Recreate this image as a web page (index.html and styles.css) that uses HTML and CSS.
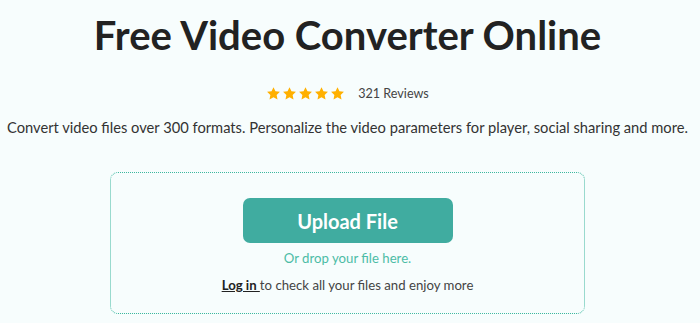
FILE: index.html
```html
<!DOCTYPE html>
<html lang="en">
<head>
<meta charset="utf-8">
<title>Free Video Converter Online</title>
<link rel="stylesheet" href="styles.css">
</head>
<body>
<main class="page">
  <h1 class="title">Free Video Converter Online</h1>
  <div class="rating">
    <span class="stars">
      <svg class="star" viewBox="0 0 24 24"><path d="M12 1.8l3.1 6.6 7.2.9-5.3 5 1.4 7.1L12 17.9l-6.4 3.5L7 14.3l-5.3-5 7.2-.9z"/></svg>
      <svg class="star" viewBox="0 0 24 24"><path d="M12 1.8l3.1 6.6 7.2.9-5.3 5 1.4 7.1L12 17.9l-6.4 3.5L7 14.3l-5.3-5 7.2-.9z"/></svg>
      <svg class="star" viewBox="0 0 24 24"><path d="M12 1.8l3.1 6.6 7.2.9-5.3 5 1.4 7.1L12 17.9l-6.4 3.5L7 14.3l-5.3-5 7.2-.9z"/></svg>
      <svg class="star" viewBox="0 0 24 24"><path d="M12 1.8l3.1 6.6 7.2.9-5.3 5 1.4 7.1L12 17.9l-6.4 3.5L7 14.3l-5.3-5 7.2-.9z"/></svg>
      <svg class="star" viewBox="0 0 24 24"><path d="M12 1.8l3.1 6.6 7.2.9-5.3 5 1.4 7.1L12 17.9l-6.4 3.5L7 14.3l-5.3-5 7.2-.9z"/></svg>
    </span>
    <span class="reviews">321 Reviews</span>
  </div>
  <p class="desc">Convert video files over 300 formats. Personalize the video parameters for player, social sharing and more.</p>
  <section class="drop">
    <button class="upload" type="button">Upload File</button>
    <p class="hint">Or drop your file here.</p>
    <p class="login"><a href="#" class="login-link">Log in </a>to check all your files and enjoy more</p>
  </section>
</main>
</body>
</html>
```
FILE: styles.css
```css
html, body {
  margin: 0;
  padding: 0;
  background: #f7fdfd;
}
body {
  font-family: Lato, "Open Sans", sans-serif;
  color: #333;
}
.page {
  display: flex;
  flex-direction: column;
  align-items: center;
  padding: 11px 5px 0 0;
}
.title {
  margin: 0;
  font-size: 40px;
  line-height: 48px;
  font-weight: 700;
  color: #222;
}
.rating {
  display: flex;
  align-items: center;
  gap: 13px;
  margin-top: 25px;
  height: 18px;
}
.stars {
  display: flex;
  gap: 1px;
}
.star {
  width: 15px;
  height: 15px;
  fill: #ffb000;
  display: block;
}
.reviews {
  font-size: 12.6px;
  color: #444;
}
.desc {
  margin: 15px 0 0;
  font-size: 14.7px;
  line-height: 20px;
  color: #333;
}
.drop {
  margin-top: 35px;
  width: 475px;
  height: 142px;
  border: 1px dotted #3cb89f;
  border-radius: 8px;
  display: flex;
  flex-direction: column;
  align-items: center;
  padding-top: 25px;
  box-sizing: border-box;
}
.upload {
  width: 210px;
  height: 45px;
  border: none;
  border-radius: 7px;
  background: #40aca0;
  color: #fff;
  font-family: inherit;
  font-size: 20px;
  font-weight: 700;
  cursor: pointer;
}
.hint {
  margin: 6px 0 0;
  font-size: 13.2px;
  line-height: 18px;
  color: #4cbca6;
}
.login {
  margin: 9px 0 0;
  font-size: 13.2px;
  line-height: 18px;
  color: #444;
}
.login-link {
  color: #222;
  font-weight: 700;
  text-decoration: underline;
}
```
